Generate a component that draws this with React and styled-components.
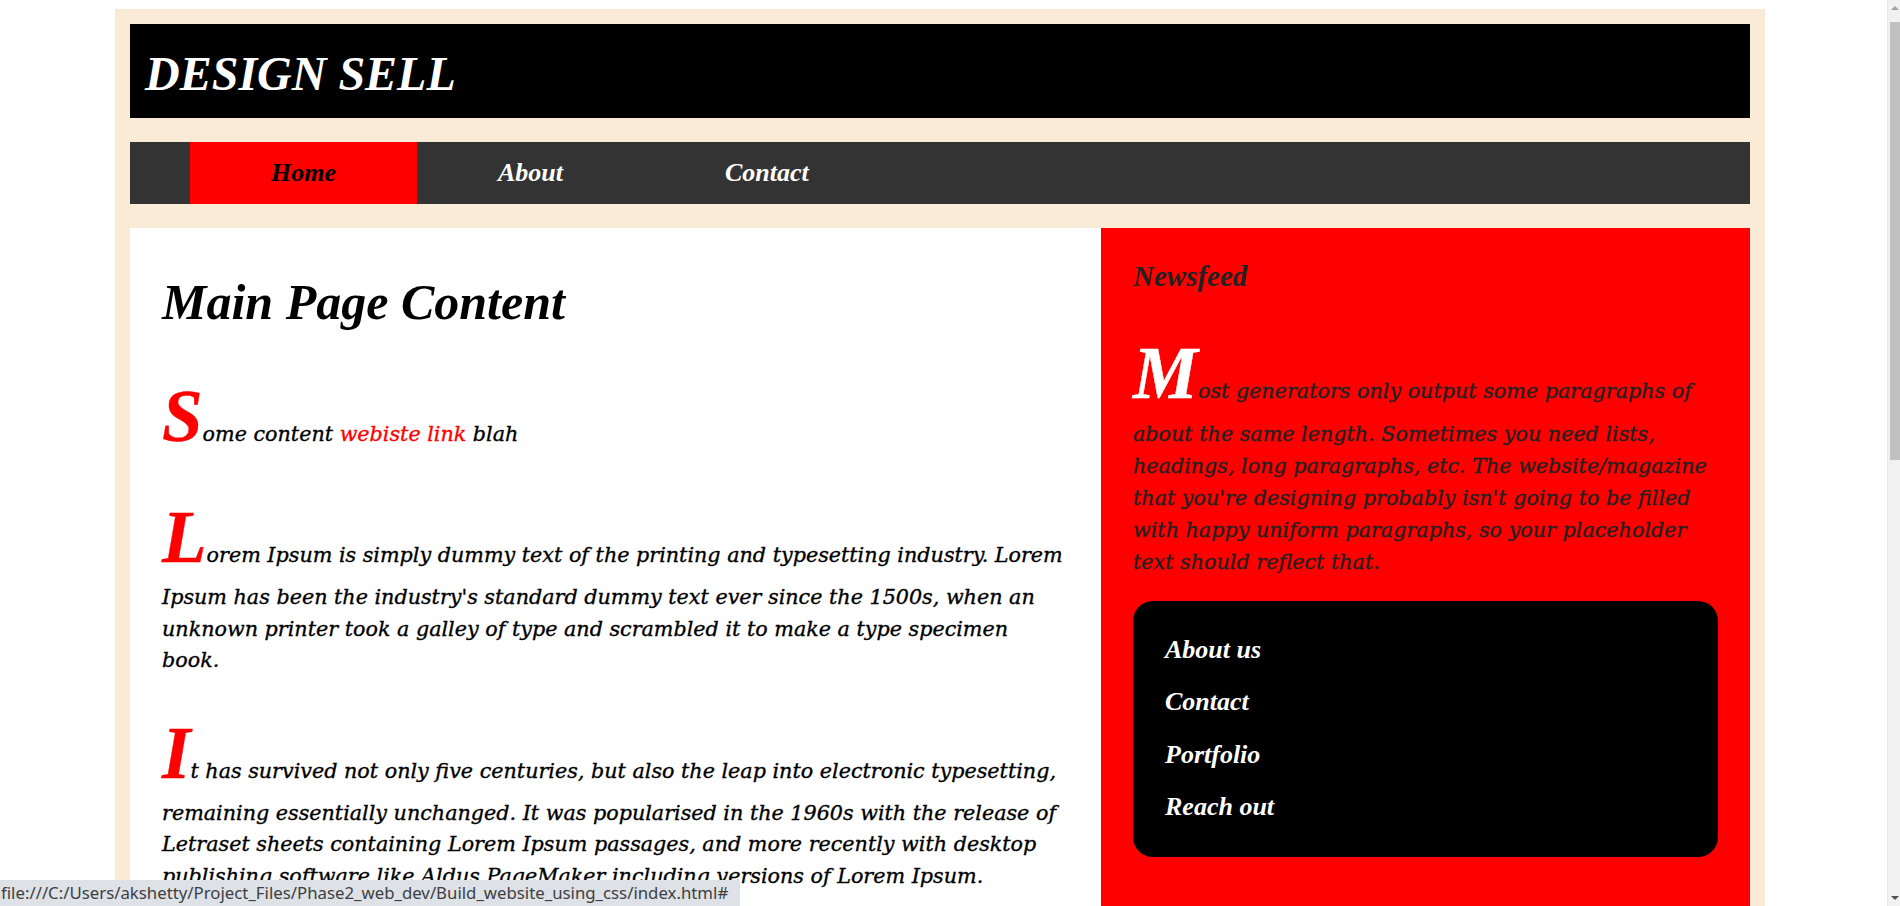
import React from "react";
import styled, { createGlobalStyle } from "styled-components";

const Global = createGlobalStyle`
  html, body { margin: 0; padding: 0; background: #ffffff; }
  body { font-family: "Liberation Serif", "Times New Roman", serif; padding-right: 20px; }
  * { box-sizing: border-box; }
`;

const serif = `"Liberation Serif", "Times New Roman", serif`;
const bodySerif = `"DejaVu Serif", "Liberation Serif", serif`;

const Frame = styled.div`
  width: 1650px;
  margin: 9px auto 0;
  padding: 15px 15px 0;
  background: #faebd7;
  display: flex;
  flex-direction: column;
  gap: 24px;
`;

const Header = styled.header`
  height: 94px;
  background: #000;
  padding: 25px 15px 0;
`;

const Title = styled.h1`
  margin: 0;
  font-family: ${serif};
  font-style: italic;
  font-weight: 700;
  font-size: 48px;
  line-height: 50px;
  color: #fff;
`;

const Nav = styled.nav`
  height: 62px;
  background: #333;
  display: flex;
  padding-left: 60px;
`;

const NavItem = styled.a`
  display: block;
  padding: 0 81px;
  line-height: 62px;
  font-family: ${serif};
  font-style: italic;
  font-weight: 700;
  font-size: 26px;
  text-decoration: none;
  color: ${(p) => (p.$active ? "#000" : "#fff")};
  background: ${(p) => (p.$active ? "#ff0000" : "transparent")};
`;

const Body = styled.div`
  display: grid;
  grid-template-columns: 971px 649px;
  min-height: 900px;
`;

const Main = styled.main`
  background: #fff;
  padding: 0 32px;
`;

const Heading = styled.h2`
  margin: 44px 0 40px;
  font-family: ${serif};
  font-style: italic;
  font-weight: 700;
  font-size: 50px;
  line-height: 60px;
  color: #000;
`;

const Para = styled.p`
  margin: 0 0 ${(p) => p.$mb ?? 32}px;
  font-family: ${bodySerif};
  font-style: italic;
  font-weight: 400;
  font-size: 20.7px;
  line-height: ${(p) => p.$lh ?? 31.5}px;
  color: ${(p) => p.$color ?? "#000"};
  -webkit-text-stroke: 0.35px currentColor;

  &::first-letter {
    font-family: ${serif};
    font-weight: 700;
    font-size: 73px;
    line-height: 89px;
    color: ${(p) => p.$cap ?? "#ff0000"};
    -webkit-text-stroke: 0;
  }
`;

const Link = styled.a`
  color: #ff0000;
  text-decoration: none;
`;

const Side = styled.aside`
  background: #ff0000;
  padding: 0 32px;
`;

const SideHeading = styled.h3`
  margin: 31px 0 35px;
  font-family: ${serif};
  font-style: italic;
  font-weight: 700;
  font-size: 29px;
  line-height: 34.8px;
  color: #222;
`;

const LinkBox = styled.ul`
  list-style: none;
  margin: 0;
  padding: 23px 32px;
  background: #000;
  border-radius: 20px;
`;

const LinkItem = styled.li`
  font-family: ${serif};
  font-style: italic;
  font-weight: 700;
  font-size: 26px;
  line-height: 52.5px;
  color: #fff;
`;

const Status = styled.div`
  position: fixed;
  left: 0;
  bottom: 0;
  height: 26px;
  padding: 0 12px 0 1px;
  background: #dee1e6;
  border-top-right-radius: 2px;
  font-family: "Noto Sans", "Open Sans", sans-serif;
  font-size: 16.8px;
  line-height: 26px;
  color: #3c4043;
  white-space: nowrap;
`;

const Scrollbar = styled.div`
  position: fixed;
  top: 0;
  right: 0;
  width: 13px;
  height: 100vh;
  background: #f1f1f1;
  border-left: 1px solid #e8e8e8;
`;

const ScrollThumb = styled.div`
  position: absolute;
  top: 22px;
  left: 2px;
  right: 0;
  height: 438px;
  background: #c1c1c1;
`;

const ScrollArrow = styled.div`
  position: absolute;
  left: 3px;
  width: 0;
  height: 0;
  border-left: 4px solid transparent;
  border-right: 4px solid transparent;
  ${(p) =>
    p.$down
      ? "bottom: 6px; border-top: 4px solid #505050;"
      : "top: 6px; border-bottom: 4px solid #a3a3a3;"}
`;

export default function App() {
  return (
    <>
      <Global />
      <Frame>
        <Header>
          <Title>DESIGN SELL</Title>
        </Header>
        <Nav>
          <NavItem href="#" $active>Home</NavItem>
          <NavItem href="#">About</NavItem>
          <NavItem href="#">Contact</NavItem>
        </Nav>
        <Body>
          <Main>
            <Heading>Main Page Content</Heading>
            <Para>
              Some content <Link href="#">webiste link</Link> blah
            </Para>
            <Para>
              Lorem Ipsum is simply dummy text of the printing and typesetting
              industry. Lorem Ipsum has been the industry's standard dummy text
              ever since the 1500s, when an unknown printer took a galley of type
              and scrambled it to make a type specimen book.
            </Para>
            <Para>
              It has survived not only five centuries, but also the leap into
              electronic typesetting, remaining essentially unchanged. It was
              popularised in the 1960s with the release of Letraset sheets
              containing Lorem Ipsum passages, and more recently with desktop
              publishing software like Aldus PageMaker including versions of
              Lorem Ipsum.
            </Para>
          </Main>
          <Side>
            <SideHeading>Newsfeed</SideHeading>
            <Para $cap="#fff" $color="#222" $lh={32} $mb={23}>
              Most generators only output some paragraphs of about the same
              length. Sometimes you need lists, headings, long paragraphs, etc.
              The website/magazine that you're designing probably isn't going to
              be filled with happy uniform paragraphs, so your placeholder text
              should reflect that.
            </Para>
            <LinkBox>
              <LinkItem>About us</LinkItem>
              <LinkItem>Contact</LinkItem>
              <LinkItem>Portfolio</LinkItem>
              <LinkItem>Reach out</LinkItem>
            </LinkBox>
          </Side>
        </Body>
      </Frame>
      <Status>file:///C:/Users/akshetty/Project_Files/Phase2_web_dev/Build_website_using_css/index.html#</Status>
      <Scrollbar>
        <ScrollArrow />
        <ScrollThumb />
        <ScrollArrow $down />
      </Scrollbar>
    </>
  );
}
